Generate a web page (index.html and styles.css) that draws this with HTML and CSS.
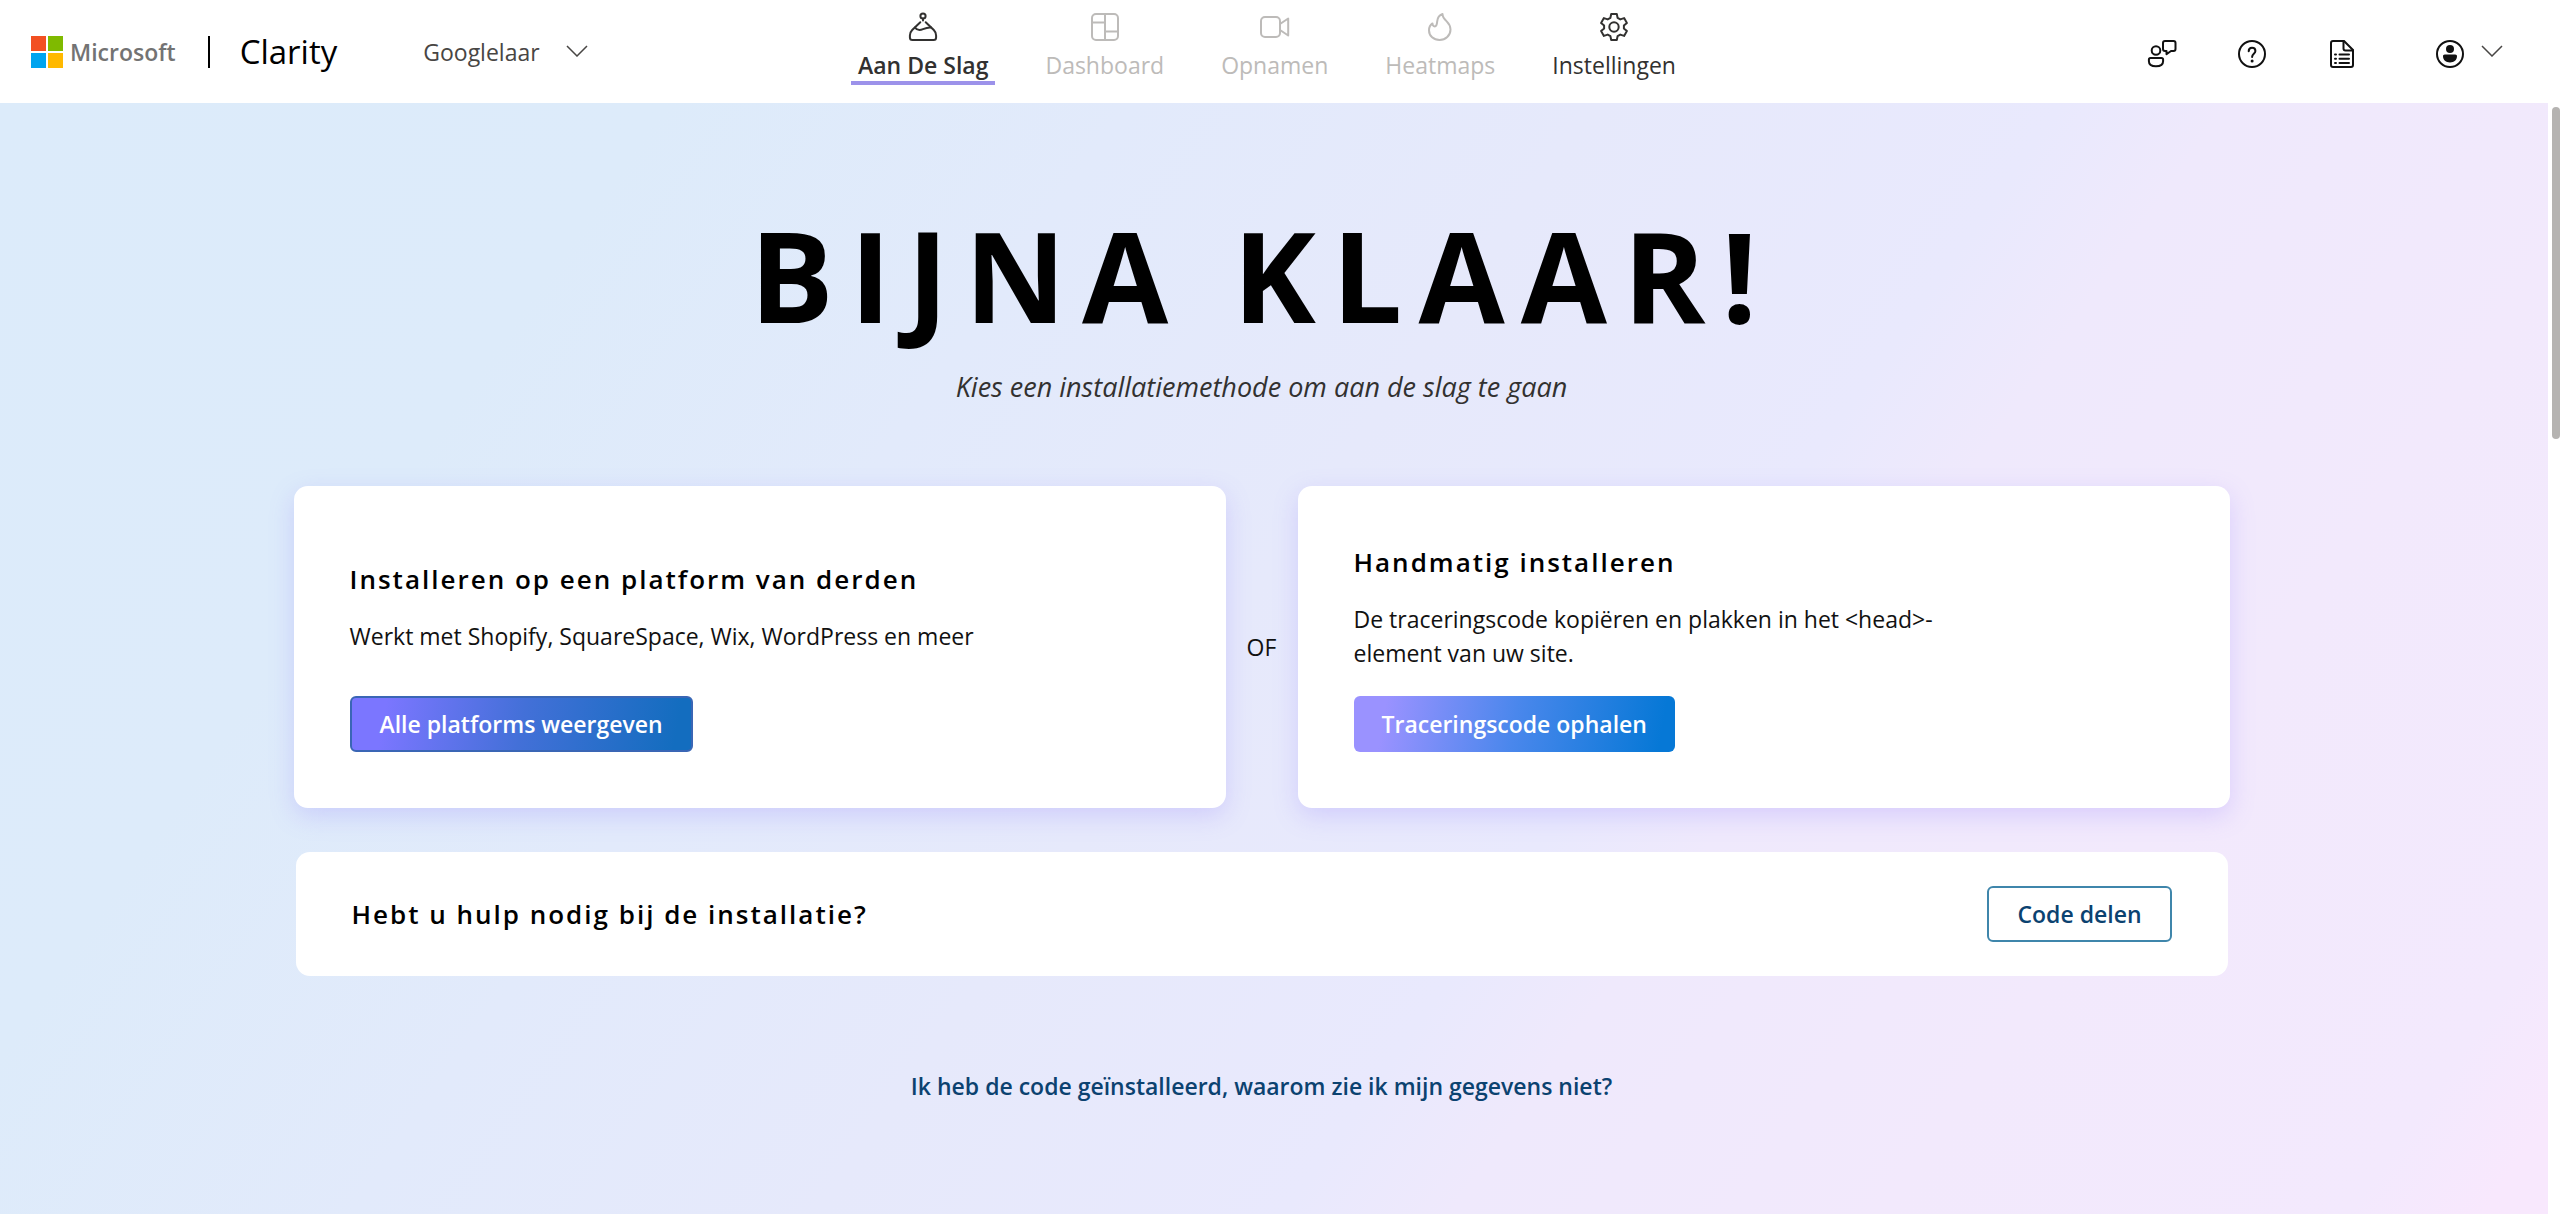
FILE: index.html
```html
<!DOCTYPE html>
<html lang="nl">
<head>
  <meta charset="UTF-8" />
  <meta name="viewport" content="width=device-width, initial-scale=1.0"/>
  <title>Microsoft Clarity - Aan De Slag</title>
  <link rel="stylesheet" href="styles.css">
</head>
<body>

  <header class="header">
    <div class="header-left">
      <a class="brand" href="#">
        <svg class="ms-logo" viewBox="0 0 32 32" aria-hidden="true">
          <rect x="0" y="0" width="15" height="15" fill="#f25022"/>
          <rect x="17" y="0" width="15" height="15" fill="#7fba00"/>
          <rect x="0" y="17" width="15" height="15" fill="#00a4ef"/>
          <rect x="17" y="17" width="15" height="15" fill="#ffb900"/>
        </svg>
        <span class="ms-name">Microsoft</span>
      </a>
      <span class="divider"></span>
      <a class="product" href="#">Clarity</a>
      <div class="project">
        <select class="project-select" aria-label="Project">
          <option>Googlelaar</option>
        </select>
        <svg class="chevron" viewBox="0 0 22 12" aria-hidden="true"><path d="M1 1l10 10L21 1"/></svg>
      </div>
    </div>

    <nav class="nav">
      <a class="nav-item active" href="#">
        <svg class="icon" viewBox="0 0 28 28" aria-hidden="true">
          <circle cx="14" cy="3" r="2.6"/>
          <path d="M14 5.6v2M11.3 9.2L3.2 17C1.6 18.6.9 20.4.9 22.6v1.9c0 1.4 1.1 2.5 2.5 2.5h21.2c1.4 0 2.5-1.1 2.5-2.5v-1.9c0-2.2-.7-4-2.3-5.6l-8.1-7.8"/>
          <path d="M6 14.6c2 2.6 4.8 3 8 1.600 3.200-1.400 5.600-2 8-1.700"/>
        </svg>
        <span class="nav-label">Aan De Slag</span>
      </a>
      <a class="nav-item disabled" href="#">
        <svg class="icon" viewBox="0 0 28 28" aria-hidden="true">
          <rect x="1" y="1" width="26" height="26" rx="4"/>
          <path d="M14 1v26M1 9.500h13M14 18.500h13"/>
        </svg>
        <span class="nav-label">Dashboard</span>
      </a>
      <a class="nav-item disabled" href="#">
        <svg class="icon" viewBox="0 0 28 28" aria-hidden="true">
          <rect x="0" y="4" width="19" height="20" rx="4"/>
          <path d="M19 11l8.200-5.500v17L19 17"/>
        </svg>
        <span class="nav-label">Opnamen</span>
      </a>
      <a class="nav-item disabled" href="#">
        <svg class="icon" viewBox="0 0 28 28" aria-hidden="true">
          <path d="M16.500 1c-3 1-5 4-5.300 7.400-.2 2.600-.6 5-2.400 5-1.600 0-2.300-1.500-2.300-3C4.200 12 3 14.500 3 17.200 3 23 7.700 27 13.600 27S24.500 22.700 24.500 16.600c0-3.600-1.600-6-3.800-8.200C18.300 6.100 16.500 4 16.500 1z"/>
        </svg>
        <span class="nav-label">Heatmaps</span>
      </a>
      <a class="nav-item" href="#">
        <svg class="icon" viewBox="0 0 28 28" aria-hidden="true">
          <circle cx="14" cy="14" r="4.700"/>
          <path d="M11.200 1h5.600l.8 3.900 2.700 1.500 3.800-1.300 2.800 4.800-3 2.600v3l3 2.600-2.800 4.800-3.800-1.300-2.700 1.500-.8 3.900h-5.600l-.8-3.900-2.700-1.500-3.800 1.300-2.800-4.800 3-2.600v-3l-3-2.600 2.800-4.800 3.800 1.300 2.700-1.500z"/>
        </svg>
        <span class="nav-label">Instellingen</span>
      </a>
    </nav>

    <div class="header-right">
      <button class="icon-button" aria-label="Feedback">
        <svg class="icon" viewBox="0 0 28 28" aria-hidden="true">
          <circle cx="8" cy="10.500" r="4.300"/>
          <path d="M2.500 18h11c1 0 1.600.7 1.600 1.600v1.600c0 3.200-3 5-7.100 5s-7.100-1.800-7.100-5v-1.600c0-.9.6-1.600 1.600-1.600z"/>
          <path d="M17 1h8.500C26.500 1 27.500 2 27.500 3v6c0 1-1 2-2 2H23l-4.500 3.200V11H17c-1 0-2-1-2-2V3c0-1 1-2 2-2z"/>
        </svg>
      </button>
      <button class="icon-button" aria-label="Help">
        <svg class="icon" viewBox="0 0 28 28" aria-hidden="true">
          <circle cx="14" cy="14" r="13"/>
          <path d="M10.700 11.200c0-2 1.400-3.500 3.300-3.500s3.400 1.400 3.400 3.200c0 2.800-3.300 3-3.300 6.100"/>
          <circle class="fill" cx="14.100" cy="21" r="1.500"/>
        </svg>
      </button>
      <button class="icon-button" aria-label="Documentatie">
        <svg class="icon" viewBox="0 0 28 28" aria-hidden="true">
          <path d="M5 1h11l9 9v15c0 1.200-.8 2-2 2H5c-1.200 0-2-.8-2-2V3c0-1.200.8-2 2-2z"/>
          <path d="M15.500 1v7.500c0 1.200.8 2 2 2H25"/>
          <path d="M7 14.500h1M11.500 14.500h9.500M7 18.800h1M11.500 18.800h9.500M7 23h1M11.500 23h9.500"/>
        </svg>
      </button>
      <button class="account" aria-label="Account">
        <svg class="icon" viewBox="0 0 28 28" aria-hidden="true">
          <circle cx="14" cy="14" r="13"/>
          <circle class="fill" cx="14" cy="9" r="4"/>
          <path class="fill" d="M8.800 14.500h10.400c1.200 0 1.800.8 1.800 1.800 0 3.800-3 6.200-7 6.200s-7-2.400-7-6.200c0-1 .6-1.800 1.800-1.800z"/>
        </svg>
        <svg class="chevron" viewBox="0 0 22 12" aria-hidden="true"><path d="M1 1l10 10L21 1"/></svg>
      </button>
    </div>
  </header>

  <div class="page">
    <main class="content">
      <h1 class="title">BIJNA KLAAR!</h1>
      <p class="subtitle">Kies een installatiemethode om aan de slag te gaan</p>

      <div class="methods">
        <section class="card">
          <div class="card-body">
            <h2 class="card-title">Installeren op een platform van derden</h2>
            <p class="card-text">Werkt met Shopify, SquareSpace, Wix, WordPress en meer</p>
          </div>
          <button class="button button-dark">Alle platforms weergeven</button>
        </section>
        <span class="or">OF</span>
        <section class="card">
          <div class="card-body">
            <h2 class="card-title">Handmatig installeren</h2>
            <p class="card-text">De traceringscode kopiëren en plakken in het &lt;head&gt;-element van uw site.</p>
          </div>
          <button class="button button-light">Traceringscode ophalen</button>
        </section>
      </div>

      <section class="help">
        <h2 class="card-title">Hebt u hulp nodig bij de installatie?</h2>
        <button class="button button-outline">Code delen</button>
      </section>

      <a class="faq-link" href="#">Ik heb de code geïnstalleerd, waarom zie ik mijn gegevens niet?</a>
    </main>
    <div class="scrollbar"><div class="scrollbar-thumb"></div></div>
  </div>

</body>
</html>
```
FILE: styles.css
```css
:root {
  --font-sans: 'Open Sans', 'Noto Sans', sans-serif;
  --text-color: #111;
  --nav-color: #323130;
  --disabled-color: #bdbbb9;
  --accent: #9c92ea;
  --link-color: #0b4270;
}

* {
  box-sizing: border-box;
}

body {
  margin: 0;
  height: 100vh;
  display: flex;
  flex-direction: column;
  font-family: var(--font-sans);
  font-size: 23px;
  color: var(--text-color);
  background: #fff;
}

a {
  color: inherit;
  text-decoration: none;
}

button,
select {
  font: inherit;
  color: inherit;
  background: none;
  border: none;
  padding: 0;
  cursor: pointer;
}

h1,
h2,
p {
  margin: 0;
}

/* header */
.header {
  display: grid;
  grid-template-columns: 1fr auto 1fr;
  align-items: center;
  height: 103px;
  flex-shrink: 0;
  padding: 0 57px 0 31px;
}

.header-left {
  display: flex;
  align-items: center;
}

.brand {
  display: flex;
  align-items: center;
  gap: 7px;
}

.ms-logo {
  width: 32px;
  height: 32px;
}

.ms-name {
  font-size: 23px;
  font-weight: 600;
  line-height: 32px;
  color: #737373;
}

.divider {
  width: 2px;
  height: 32px;
  margin: 0 30px 0 32px;
  background: #000;
}

.product {
  font-size: 33px;
  line-height: 40px;
  color: #000;
}

.project {
  position: relative;
  margin-left: 86px;
}

.project-select {
  appearance: none;
  padding-right: 48px;
  line-height: 32px;
  color: #484644;
}

.project .chevron {
  position: absolute;
  right: 0;
  top: 9px;
  pointer-events: none;
}

.chevron {
  width: 22px;
  height: 12px;
  fill: none;
  stroke: #484644;
  stroke-width: 1.5;
}

.nav {
  display: flex;
  align-self: start;
  gap: 43px;
  padding-top: 13px;
}

.nav-item {
  display: flex;
  flex-direction: column;
  align-items: center;
  gap: 8px;
  padding: 0 7px;
  border-bottom: 4px solid transparent;
  color: var(--nav-color);
}

.nav-item.active {
  font-weight: 600;
  border-color: var(--accent);
}

.nav-item.disabled {
  color: var(--disabled-color);
}

.nav-label {
  line-height: 32px;
}

.icon {
  width: 28px;
  height: 28px;
  overflow: visible;
  fill: none;
  stroke: currentColor;
  stroke-width: 2;
  stroke-linejoin: round;
  stroke-linecap: round;
}

.icon .fill {
  fill: currentColor;
  stroke: none;
}

.header-right {
  display: flex;
  justify-content: flex-end;
  align-items: center;
  gap: 62px;
  padding-top: 4px;
}

.icon-button,
.account {
  display: flex;
  align-items: center;
}

.account {
  gap: 17px;
  margin-left: 18px;
}

/* the chevron sits a little above the icon's middle */
.account .chevron {
  margin-bottom: 6px;
}

/* page */
.page {
  flex: 1;
  display: flex;
}

.content {
  flex: 1;
  display: flex;
  flex-direction: column;
  align-items: center;
  padding: 102px 25px 60px 0;
  background: linear-gradient(125deg, #dcebfa 0%, #ddebfa 20%, #e2eafb 34%, #e6e9fb 48%, #e9e9fd 62%, #efe9fc 67%, #f2e9fc 80%, #f3e9fd 94%, #f8e8fd 98%);
}

.title {
  font-size: 125px;
  line-height: 140px;
  font-weight: 700;
  letter-spacing: 16px;
  color: #000;
}

.subtitle {
  margin-top: 24px;
  font-size: 27px;
  line-height: 36px;
  font-style: italic;
  color: #323130;
}

.methods {
  display: flex;
  align-items: stretch;
  width: 100%;
  max-width: 1936px;
  margin-top: 81px;
}

.card {
  flex: 1;
  display: flex;
  flex-direction: column;
  align-items: flex-start;
  gap: 26px;
  padding: 56px;
  background: #fff;
  border-radius: 14px;
  box-shadow: 0 8px 24px rgba(145, 125, 255, 0.25);
}

.card-body {
  flex: 1;
  display: flex;
  flex-direction: column;
  justify-content: center;
  gap: 20px;
}

.card-title {
  font-size: 26px;
  line-height: 40px;
  font-weight: 600;
  letter-spacing: 2px;
  color: #000;
}

.card-text {
  max-width: 640px;
  line-height: 34px;
}

.or {
  width: 72px;
  align-self: center;
  text-align: center;
}

.button {
  height: 56px;
  padding: 0 28px;
  border: 2px solid transparent;
  border-radius: 6px;
  font-weight: 600;
  white-space: nowrap;
}

.button-dark {
  color: #fff;
  border-color: #3a66b5;
  background: linear-gradient(100deg, #7b76ff 10%, #4370d8 50%, #136dbf 95%);
}

.button-light {
  color: #fff;
  border: none;
  background: linear-gradient(100deg, #9a92ff 10%, #4a87ec 50%, #0678d6 95%);
}

.button-outline {
  color: var(--link-color);
  border-color: #3f86ab;
  background: #fff;
}

.help {
  display: flex;
  align-items: center;
  justify-content: space-between;
  width: 100%;
  max-width: 1932px;
  margin-top: 44px;
  padding: 34px 56px;
  background: #fff;
  border-radius: 14px;
}

.faq-link {
  margin-top: 93px;
  line-height: 34px;
  font-weight: 600;
  color: var(--link-color);
}

/* scrollbar */
.scrollbar {
  display: flex;
  justify-content: flex-end;
  width: 12px;
  padding-top: 4px;
  background: #fff;
}

.scrollbar-thumb {
  width: 8px;
  height: 30%;
  border-radius: 4px;
  background: #b5b3b1;
}
```
